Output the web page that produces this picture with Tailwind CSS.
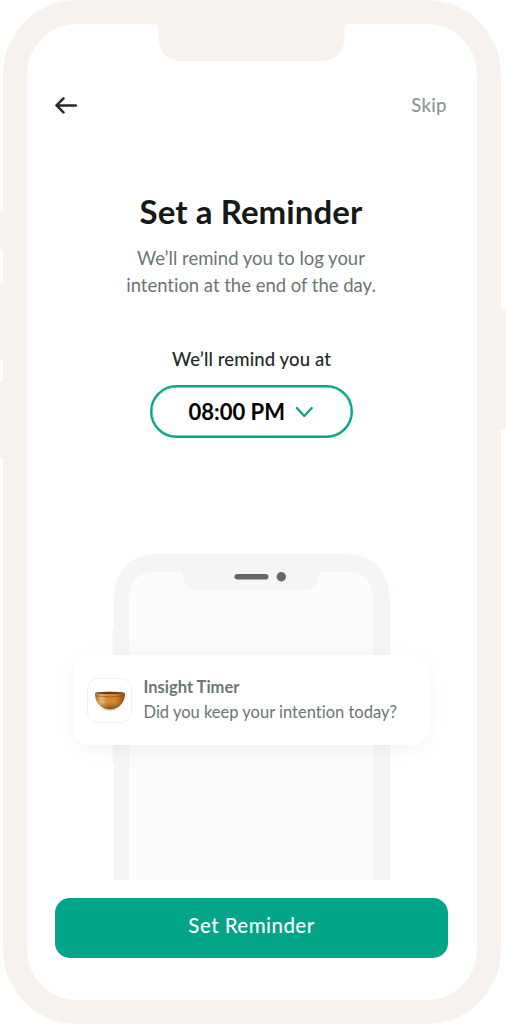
<!DOCTYPE html>
<html lang="en">
<head>
<meta charset="utf-8">
<title>Set a Reminder</title>
<script src="https://cdn.jsdelivr.net/npm/@tailwindcss/browser@4"></script>
</head>
<body class="bg-white overflow-hidden font-['Lato',sans-serif] [font-variant-ligatures:none]">
<div class="relative w-[506px] h-[1024px] overflow-hidden">
  <!-- hardware buttons -->
  <div class="absolute left-[-4px] top-[211px] w-2 h-[38px] bg-[#f7f2ee]"></div>
  <div class="absolute left-[-4px] top-[283px] w-2 h-[77px] bg-[#f7f2ee]"></div>
  <div class="absolute left-[-4px] top-[381px] w-2 h-[77px] bg-[#f7f2ee]"></div>
  <div class="absolute left-[496px] top-[309px] w-[10px] h-[121px] rounded-r-[3px] bg-[#f7f2ee]"></div>

  <div class="relative ml-[2.5px] w-[498.5px] h-[1024px] rounded-[74px] bg-[#f7f2ee] p-6">
    <main class="h-[976px] rounded-[50px] bg-white flex flex-col items-center pl-[28px] pr-[29.5px]">
      <svg class="w-[194px] h-[37px] shrink-0" viewBox="0 0 194 37" fill="#f7f2ee"><path d="M0 0C3.500 0 4.500 1.500 4.500 5V11C4.500 28 12 37 29 37H166C183 37 190.500 28 190.500 11V5C190.500 1.500 191.500 0 194 0Z"/></svg>

      <header class="w-full h-10 mt-6 flex items-center justify-between">
        <svg class="w-6 h-6" viewBox="0 0 24 24" fill="none" stroke="#252b29" stroke-width="2.500" stroke-linecap="round" stroke-linejoin="round"><path d="M20.800 12.400H1.500M8.500 5.400L1.500 12.400L8.500 19.400"/></svg>
        <span class="text-[18.5px] leading-6 text-[#8b9693] font-medium whitespace-nowrap mr-[1px] tracking-[0.2px]">Skip</span>
      </header>

      <h1 class="mt-[66px] text-[33px] leading-10 font-bold text-[#151918] whitespace-nowrap tracking-[0.1px]">Set a Reminder</h1>
      <p class="mt-[14px] text-[18.5px] leading-[26.5px] text-[#6b7673] text-center whitespace-nowrap"><span class="block">We’ll remind you to log your</span><span class="block tracking-[-0.02px]">intention at the end of the day.</span></p>

      <p class="mt-[49px] ml-[1px] text-[18.5px] leading-6 font-medium text-[#252a28] whitespace-nowrap tracking-[0.12px]">We’ll remind you at</p>
      <div class="mt-[14px] w-[203px] h-[53px] shrink-0 rounded-full border-2 border-[#05a688] shadow-[inset_0_0_0_0.5px_#05a688] flex items-center pl-[37px] gap-[10px]">
        <span class="text-[22px] leading-7 font-bold text-black whitespace-nowrap pt-px">08:00 PM</span>
        <svg class="w-[18px] h-3 mt-px" viewBox="0 0 18 12" fill="none" stroke="#05a688" stroke-width="2.300" stroke-linecap="round" stroke-linejoin="round"><path d="M1.900 2L9.300 10L16.700 2"/></svg>
      </div>

      <section class="relative mt-[116px] w-[356px] h-[327px] shrink-0">
        <svg class="w-[356px] h-[327px]" viewBox="73 554 356 327">
          <path fill="#f4f6f6" d="M114 880V762H112.500V630H114V600C114 568 132 554 158 554H345C373 554 390 570 390 602V880Z"/>
          <path fill="#fbfdfc" d="M129.500 880V600C129.500 582 139 572 153 572H179C183 572 182.500 573 183.500 577C185 586 191 590.500 200 590.500H304C313 590.500 318 586 319 577C319.500 573 319 572 323 572H350C364 572 373 582 373 600V880Z"/>
          <rect x="234.500" y="574" width="34" height="5.500" rx="2.750" fill="#666"/>
          <circle cx="281.300" cy="576.700" r="4.700" fill="#666"/>
        </svg>
        <div class="absolute left-0 top-[101px] w-[356px] h-[90px] rounded-[17px] bg-white shadow-[0_4px_22px_rgba(0,0,0,0.05)] flex items-center pl-[14px] pt-px gap-[11.5px]">
          <div class="w-[45px] h-[45px] shrink-0 rounded-[11px] border border-[#f0f1f1] flex items-center justify-center">
            <svg class="w-8 h-6" viewBox="0 0 34 24" preserveAspectRatio="none">
              <defs>
                <linearGradient id="wood" x1="0" x2="1"><stop offset="0" stop-color="#b0691f"/><stop offset=".2" stop-color="#e5b478"/><stop offset=".42" stop-color="#d08a35"/><stop offset=".7" stop-color="#cf822b"/><stop offset="1" stop-color="#8c4a14"/></linearGradient>
                <linearGradient id="depth" x1="0" x2="0" y1="0" y2="1"><stop offset=".6" stop-color="#7a3c08" stop-opacity="0"/><stop offset="1" stop-color="#6a3408" stop-opacity=".65"/></linearGradient>
                <radialGradient id="ground"><stop offset="0" stop-color="#777" stop-opacity=".6"/><stop offset="1" stop-color="#999" stop-opacity="0"/></radialGradient>
              </defs>
              <ellipse cx="17" cy="20" rx="11" ry="2.500" fill="url(#ground)"/>
              <path d="M1 4C1 12 5 16 9 18.500Q12 20.300 17 20.300T25 18.500C29 16 33 12 33 4Z" fill="url(#wood)"/>
              <path d="M1 4C1 12 5 16 9 18.500Q12 20.300 17 20.300T25 18.500C29 16 33 12 33 4Z" fill="url(#depth)"/>
              <path d="M1.500 6.800Q17 9 32.500 6.800" fill="none" stroke="#93500f" stroke-width=".7"/>
              <ellipse cx="17" cy="4" rx="16" ry="1.500" fill="#c98745"/>
              <ellipse cx="17" cy="4" rx="15" ry="1" fill="#71370c"/>
            </svg>
          </div>
          <div class="whitespace-nowrap text-[#6b7673] text-[16.5px] leading-[25px] -mt-[2px]">
            <p class="font-bold">Insight Timer</p>
            <p>Did you keep your intention today?</p>
          </div>
        </div>
      </section>

      <button class="mt-[16.5px] w-[393px] h-[60px] shrink-0 rounded-[15px] bg-[#02a588] text-white text-[20.5px] leading-6 font-medium pb-[5px] pl-[1px] whitespace-nowrap tracking-[0.45px]">Set Reminder</button>
    </main>
  </div>
</div>
</body>
</html>
